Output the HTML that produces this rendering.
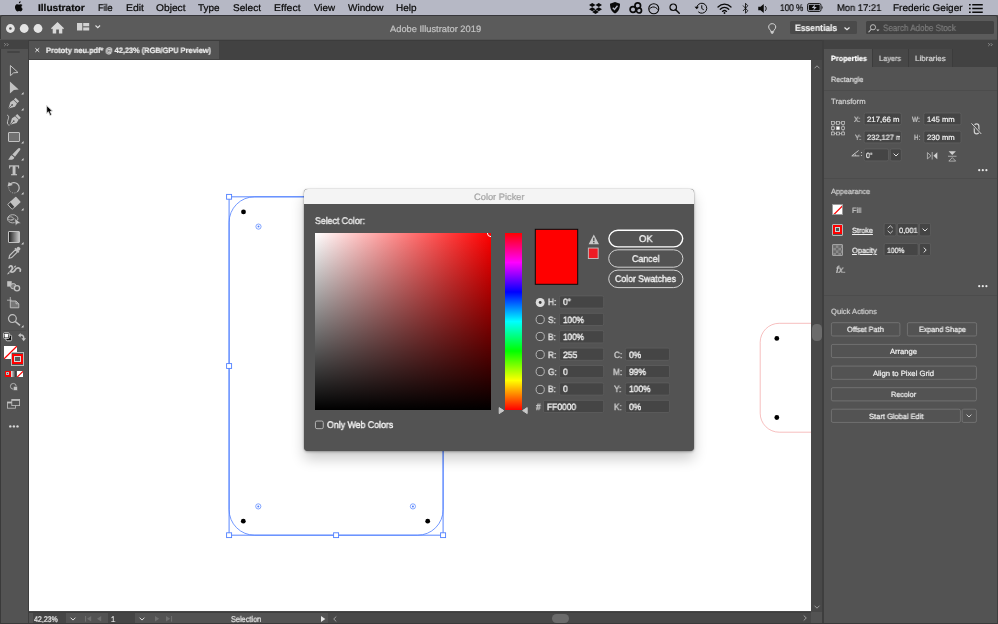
<!DOCTYPE html>
<html lang="en">
<head>
<meta charset="utf-8">
<title>Adobe Illustrator 2019 - Color Picker</title>
<style>
*{box-sizing:border-box;margin:0;padding:0}
html,body{width:998px;height:624px;overflow:hidden;background:#535353}
body{position:relative;font-family:"Liberation Sans",sans-serif;font-size:9px;color:#e6e6e6;text-rendering:geometricPrecision}
.a{position:absolute}
svg{position:absolute;overflow:visible}
.t{position:absolute;white-space:nowrap;line-height:1;-webkit-text-stroke:.22px;transform:scaleX(.88);transform-origin:0 0;will-change:transform}
.c{display:inline-block;will-change:transform;transform:scaleX(.88);transform-origin:50% 50%;white-space:nowrap}
.l{display:inline-block;will-change:transform;transform:scaleX(.88);transform-origin:0 50%;white-space:nowrap}
/* menu bar */
#menubar{left:0;top:0;width:998px;height:15.300px;background:#b6b8c5}
/* app bar */
#appbar{left:0;top:15.300px;width:998px;height:24.200px;background:#5b5b5b;border-top:1.800px solid #37373b;border-left:1px solid #3a3a3a;border-right:1px solid #3a3a3a;border-radius:2.500px 2.500px 0 0}
/* tab bar */
#tabbar{left:0;top:39.500px;width:998px;height:20.500px;background:#424242;border-top:1px solid #3c3c3c}
#doctab{left:29px;top:40.500px;width:190.200px;height:18.800px;background:#535353}
/* tool bar */
#tools{left:0;top:40px;width:29px;height:584px;background:#535353;border-right:1px solid #3e3e3e;border-left:0.800px solid #3a3a3a}
#toolshead{left:0;top:40.300px;width:28px;height:8.500px;background:#434343}
/* canvas */
#canvas{left:29px;top:60px;width:782px;height:551px;background:#fff;overflow:hidden}
#vscroll{left:811px;top:60px;width:11px;height:551px;background:#484848}
#statusbar{left:29px;top:611px;width:794px;height:13px;background:#484848}
#gap{left:822px;top:40px;width:2px;height:584px;background:#3e3e3e}
/* right panel */
#rpanel{left:824px;top:40px;width:174px;height:584px;background:#535353}
#rtabs{left:824px;top:40px;width:174px;height:27px;background:#424242}
#winb{left:0;top:623px;width:998px;height:1px;background:#3a3a3a}
#winr{left:997px;top:17px;width:1px;height:607px;background:#3f3f3f}
/* dialog */
#dlg{left:304px;top:188.500px;width:389.700px;height:262.200px;background:#535353;border-radius:4px;box-shadow:0 8px 14px rgba(0,0,0,.2),0 1px 3px rgba(0,0,0,.3),0 0 1px rgba(0,0,0,.5);overflow:hidden}
#dlgtitle{left:0;top:0;width:390px;height:15px;background:#f4f4f4}
#sq{left:315px;top:233px;width:176px;height:177px;overflow:hidden;background:linear-gradient(to bottom,rgba(0,0,0,0),#000),linear-gradient(to right,#fff,#f00)}
#hue{left:504.500px;top:233px;width:17.500px;height:177px;background:linear-gradient(to bottom,#f00 0%,#f0f 16.670%,#00f 33.330%,#0ff 50%,#0f0 66.670%,#ff0 83.330%,#f00 100%)}
</style>
</head>
<body>
<div id="menubar" class="a"></div>
<div id="appbar" class="a"></div>
<div id="tabbar" class="a"></div>
<div id="doctab" class="a"></div>
<div id="tools" class="a"></div>
<div id="toolshead" class="a"></div>
<div id="canvas" class="a"></div>
<div id="vscroll" class="a"></div>
<div id="statusbar" class="a"></div>
<div id="gap" class="a"></div>
<div id="rpanel" class="a"></div>
<div id="rtabs" class="a"></div>
<svg style="left:14.4px;top:1.4px" width="9.2" height="11" viewBox="0 0 170 205"><path fill="#0a0a0a" d="M150.4 172.2c-7.4 11-15 21.9-27.1 22.1-12 .3-15.800-7.100-29.500-7.100s-18 6.900-29.300 7.400c-11.700.4-20.600-11.800-28.100-22.700C21.100 149.700 9.400 109 25.100 81.600c7.800-13.600 21.700-22.200 36.800-22.400 11.500-.2 22.300 7.700 29.300 7.700 7 0 20.200-9.500 34-8.100 5.800.2 22 2.300 32.400 17.600-.8.500-19.400 11.300-19.200 33.800.3 26.900 23.600 35.800 23.900 35.900-.2.600-3.700 12.700-12.200 25.100zM98.800 15.800C105.200 8.300 116 2.700 124.900 2.400c1.200 10.400-3 20.800-9.200 28.300-6.200 7.500-16.300 13.300-26.300 12.500-1.300-10.200 3.700-20.800 9.400-27.400z"/></svg>
<div class="t" style="left:37.9px;top:4px;font-size:9.7px;transform:scaleX(1.044);font-weight:700;color:#0a0a0a;">Illustrator</div>
<div class="t" style="left:98.2px;top:4px;font-size:9.7px;transform:scaleX(0.928);color:#0a0a0a;">File</div>
<div class="t" style="left:125.8px;top:4px;font-size:9.7px;transform:scaleX(1.077);color:#0a0a0a;">Edit</div>
<div class="t" style="left:155.8px;top:4px;font-size:9.7px;transform:scaleX(1.056);color:#0a0a0a;">Object</div>
<div class="t" style="left:198.4px;top:4px;font-size:9.7px;transform:scaleX(1.027);color:#0a0a0a;">Type</div>
<div class="t" style="left:233.0px;top:4px;font-size:9.7px;transform:scaleX(1.039);color:#0a0a0a;">Select</div>
<div class="t" style="left:274.0px;top:4px;font-size:9.7px;transform:scaleX(1.080);color:#0a0a0a;">Effect</div>
<div class="t" style="left:313.6px;top:4px;font-size:9.7px;transform:scaleX(1.012);color:#0a0a0a;">View</div>
<div class="t" style="left:348.2px;top:4px;font-size:9.7px;transform:scaleX(1.032);color:#0a0a0a;">Window</div>
<div class="t" style="left:396.3px;top:4px;font-size:9.7px;transform:scaleX(1.028);color:#0a0a0a;">Help</div>
<div class="t" style="left:780.3px;top:4px;font-size:9.7px;transform:scaleX(0.854);color:#0a0a0a;">100 %</div>
<div class="t" style="left:837.0px;top:4px;font-size:9.7px;transform:scaleX(0.967);color:#0a0a0a;">Mon 17:21</div>
<div class="t" style="left:892.7px;top:4px;font-size:9.7px;transform:scaleX(1.034);color:#0a0a0a;">Frederic Geiger</div>
<svg style="left:589px;top:2.5px" width="13" height="11" viewBox="0 0 26 22"><g fill="#0a0a0a"><path d="M6.500 0 L13 4.100 L6.500 8.200 L0 4.100Z"/><path d="M19.500 0 L26 4.100 L19.500 8.200 L13 4.100Z"/><path d="M6.500 8.300 L13 12.400 L6.500 16.500 L0 12.400Z"/><path d="M19.500 8.300 L26 12.400 L19.500 16.500 L13 12.400Z"/><path d="M6.500 17.800 L13 13.700 L19.500 17.800 L13 21.900Z"/></g></svg>
<svg style="left:610px;top:2.3px" width="10" height="11.500" viewBox="0 0 20 23"><path fill="#0a0a0a" d="M10 0 L20 3.500 C20 12 17.500 19 10 23 C2.500 19 0 12 0 3.500Z"/><path d="M5.500 11.500 L9 15 L15 7.500" fill="none" stroke="#b6b8c5" stroke-width="2.600"/></svg>
<svg style="left:629px;top:2px" width="14" height="12" viewBox="0 0 28 24"><g fill="none" stroke="#0a0a0a" stroke-width="3.400"><circle cx="17.500" cy="7.500" r="5.600"/><circle cx="8" cy="15" r="5.800"/><circle cx="20" cy="17" r="5"/></g></svg>
<svg style="left:648.300px;top:2.500px" width="11.500" height="11.500" viewBox="0 0 23 23"><circle cx="11.500" cy="11.500" r="10" fill="none" stroke="#0a0a0a" stroke-width="2.200"/><path d="M2.500 12.500 C6 7.500 12 7 15 9 C17.500 10.500 19.500 12 21 14" fill="none" stroke="#0a0a0a" stroke-width="2"/></svg>
<svg style="left:669px;top:2.800px" width="11" height="11" viewBox="0 0 22 22"><circle cx="8.500" cy="8.500" r="6.500" fill="none" stroke="#0a0a0a" stroke-width="2.400"/><path d="M13.500 13.500 L20.500 20.500" stroke="#0a0a0a" stroke-width="2.800" stroke-linecap="round"/></svg>
<svg style="left:693.500px;top:1.800px" width="13.500" height="12.500" viewBox="0 0 27 25"><path d="M5.500 12.500 A10 10 0 1 1 8.500 19.600" fill="none" stroke="#0a0a0a" stroke-width="2"/><path d="M1 9.500 L5.600 14.500 L9.800 9.300Z" fill="#0a0a0a"/><path d="M15.500 6.500 V13 L19.500 15.500" fill="none" stroke="#0a0a0a" stroke-width="2"/></svg>
<svg style="left:717px;top:2.500px" width="15" height="11" viewBox="0 0 30 22"><g fill="none" stroke="#0a0a0a" stroke-width="2.600" stroke-linecap="round"><path d="M2 8 C9.500 0.500 20.500 0.500 28 8"/><path d="M6.500 12.500 C11.500 7.500 18.500 7.500 23.500 12.500"/><path d="M11 16.800 C13.400 14.600 16.600 14.600 19 16.800"/></g><circle cx="15" cy="20" r="1.900" fill="#0a0a0a"/></svg>
<svg style="left:741.500px;top:1.800px" width="7" height="12.500" viewBox="0 0 14 25"><path d="M2 7 L11.500 17.500 L7 22.500 V2.500 L11.500 7.500 L2 18" fill="none" stroke="#0a0a0a" stroke-width="1.700" stroke-linejoin="round"/></svg>
<svg style="left:758px;top:2.500px" width="11" height="11" viewBox="0 0 22 22"><path d="M0.500 7.500 H5 L11.500 2 V20 L5 14.500 H0.500Z" fill="#0a0a0a"/><path d="M15 7 C17 9.500 17 12.500 15 15" fill="none" stroke="#0a0a0a" stroke-width="2" stroke-linecap="round"/></svg>
<svg style="left:807px;top:3.300px" width="16.500" height="9" viewBox="0 0 33 18"><rect x="1" y="1" width="27" height="16" rx="3.500" fill="none" stroke="#0a0a0a" stroke-width="1.800"/><rect x="3.600" y="3.600" width="21.800" height="10.800" rx="1.500" fill="#0a0a0a"/><path d="M29.500 6 V12 C31.800 11.500 31.800 6.500 29.500 6Z" fill="#0a0a0a"/><path d="M16 2.500 L9.500 10 H14 L12.500 15.500 L19.500 8 H15 Z" fill="#b6b8c5"/></svg>
<svg style="left:969px;top:4px" width="14" height="9" viewBox="0 0 28 18"><g fill="#0a0a0a"><rect x="0" y="0" width="3.400" height="3"/><rect x="6.500" y="0" width="21" height="3"/><rect x="0" y="7.500" width="3.400" height="3"/><rect x="6.500" y="7.500" width="21" height="3"/><rect x="0" y="15" width="3.400" height="3"/><rect x="6.500" y="15" width="21" height="3"/></g></svg>
<svg style="left:0;top:20px" width="46" height="17" viewBox="0 0 46 17"><circle cx="10.4" cy="8.500" r="4.400" fill="#e4e4e4"/><circle cx="24.2" cy="8.500" r="4.400" fill="#e4e4e4"/><circle cx="38" cy="8.500" r="4.400" fill="#e4e4e4"/><circle cx="10.400" cy="8.500" r="1.300" fill="#555"/></svg>
<svg style="left:51px;top:22.400px" width="13" height="11.600" viewBox="0 0 13 11.600"><path fill="#d8d8d8" d="M6.500 0 L13 6.200 L12.100 7.200 L11.300 6.500 V11.500 H7.900 V7.600 H5.200 V11.500 H1.700 V6.500 L0.900 7.200 L0 6.200 Z"/></svg>
<svg style="left:76.800px;top:23.100px" width="12.200" height="7.500" viewBox="0 0 12.200 7.500"><g fill="#d2d2d2"><rect x="0" y="0" width="5.300" height="7.500"/><rect x="6.200" y="0" width="6" height="3.300"/><rect x="6.200" y="4.400" width="6" height="3.100"/></g></svg>
<svg style="left:94.600px;top:25.100px" width="5.600" height="3.400" viewBox="0 0 5.600 3.400"><path d="M0.500 0.500 L2.800 2.700 L5.100 0.500" fill="none" stroke="#e2e2e2" stroke-width="1.100"/></svg>
<div class="t" style="left:389.8px;top:25px;font-size:9.2px;transform:scaleX(1.013);color:#c2c2c2;">Adobe Illustrator 2019</div>
<svg style="left:768.300px;top:22.500px" width="8.400" height="11.500" viewBox="0 0 16.800 23"><path d="M8.400 1.300 C4 1.300 1.300 4.400 1.300 8 C1.300 10.800 3 12.300 4.300 13.800 C5 14.700 5.300 15.600 5.300 16.800 H11.500 C11.500 15.600 11.800 14.700 12.500 13.800 C13.800 12.300 15.500 10.800 15.500 8 C15.500 4.400 12.800 1.300 8.400 1.300Z" fill="none" stroke="#d6d6d6" stroke-width="2"/><rect x="5.400" y="17.800" width="6" height="2" fill="#d6d6d6"/><rect x="6.400" y="20.400" width="4" height="1.800" rx="0.800" fill="#d6d6d6"/></svg>
<div class="a" style="left:789.800px;top:21.300px;width:67px;height:13.200px;background:#4a4a4a;border-radius:1.500px"></div>
<div class="t" style="left:794.7px;top:24px;font-size:9.2px;transform:scaleX(0.929);font-weight:700;color:#ececec;">Essentials</div>
<svg style="left:844.400px;top:26.800px" width="6" height="3.500" viewBox="0 0 12 7"><path d="M1 1 L6 5.500 L11 1" fill="none" stroke="#e8e8e8" stroke-width="2.500"/></svg>
<div class="a" style="left:865.600px;top:21.300px;width:128.400px;height:13.200px;background:#424242;border-radius:1.500px"></div>
<svg style="left:868px;top:23.500px" width="12" height="9" viewBox="0 0 24 18"><circle cx="10" cy="6.500" r="5.200" fill="none" stroke="#c6c6c6" stroke-width="1.800"/><path d="M6.500 10.500 L1 16.500" stroke="#c6c6c6" stroke-width="2.200"/><path d="M16.500 11 H23 L19.750 14.500Z" fill="#c6c6c6"/></svg>
<div class="t" style="left:883.0px;top:24px;font-size:9.2px;transform:scaleX(0.873);color:#7c7c7c;">Search Adobe Stock</div>
<svg style="left:3.700px;top:42.700px" width="5.500" height="3.200" viewBox="0 0 11 6.400"><path d="M0.600 0.400 L3.400 3.200 L0.600 6 M5.600 0.400 L8.400 3.200 L5.600 6" fill="none" stroke="#b4b4b4" stroke-width="1.300"/></svg>
<div class="a" style="left:7px;top:51px;width:13px;height:2px;background:#444;border-radius:1px"></div>
<svg style="left:34.500px;top:48.200px" width="4.600" height="4.200" viewBox="0 0 9.200 8.400"><path d="M0.800 0.600 L8.400 7.800 M8.400 0.600 L0.800 7.800" stroke="#f0f0f0" stroke-width="1.900"/></svg>
<div class="t" style="left:45.7px;top:47px;font-size:7.8px;transform:scaleX(0.946);font-weight:700;color:#ededed;">Prototy neu.pdf* @ 42,23% (RGB/GPU Preview)</div>
<svg style="left:988px;top:42.700px" width="5.500" height="3.200" viewBox="0 0 11 6.400"><path d="M0.600 0.400 L3.400 3.200 L0.600 6 M5.600 0.400 L8.400 3.200 L5.600 6" fill="none" stroke="#b4b4b4" stroke-width="1.300"/></svg>
<svg style="left:9px;top:64px" width="11" height="13" viewBox="0 0 11 13"><path d="M1.400 1.500 L9 8.500 L4.700 8.800 L1.400 11.700Z" fill="none" stroke="#c2c2c2" stroke-width="1" stroke-linejoin="miter"/></svg>
<svg style="left:9px;top:81px" width="11" height="13" viewBox="0 0 11 13"><path d="M0.900 0.500 L9.700 8.600 L4.900 8.900 L0.900 12.400Z" fill="#c2c2c2"/></svg>
<svg style="left:20.7px;top:91.5px" width="2.6" height="2.4" viewBox="0 0 2.6 2.4"><path d="M2.600 0.100 V2.400 H0.200Z" fill="#d6d6d6"/></svg>
<svg style="left:0px;top:97.5px" width="28" height="13" viewBox="0 0 28 13"><g transform="translate(12.800 6.200) rotate(45) scale(0.93)"><rect x="-2.700" y="-7" width="5.400" height="2.600" fill="#c2c2c2"/><path d="M-2.700 -3.700 H2.700 L3.500 0.200 L0 6.600 L-3.500 0.200Z" fill="#c2c2c2"/><path d="M0 6.600 V1.600" stroke="#535353" stroke-width="0.800"/><circle cx="0" cy="1" r="0.950" fill="#535353"/></g></svg>
<svg style="left:20.7px;top:108px" width="2.6" height="2.4" viewBox="0 0 2.6 2.4"><path d="M2.600 0.100 V2.400 H0.200Z" fill="#d6d6d6"/></svg>
<svg style="left:0px;top:114.3px" width="28" height="13" viewBox="0 0 28 13"><g transform="translate(14.400 6.500) rotate(45) scale(0.93)"><rect x="-2.700" y="-7" width="5.400" height="2.600" fill="#c2c2c2"/><path d="M-2.700 -3.700 H2.700 L3.500 0.200 L0 6.600 L-3.500 0.200Z" fill="#c2c2c2"/><path d="M0 6.600 V1.600" stroke="#535353" stroke-width="0.800"/><circle cx="0" cy="1" r="0.950" fill="#535353"/></g><path d="M7.200 1.100 C10 2 8 5.200 7.500 7.600 C7.100 9.800 8 11.300 9.600 11.100" fill="none" stroke="#c2c2c2" stroke-width="1"/></svg>
<div class="a" style="left:8.100px;top:132px;width:12px;height:9.800px;background:#707070;border:1px solid #c2c2c2;border-radius:1px"></div>
<svg style="left:20.7px;top:141.4px" width="2.6" height="2.4" viewBox="0 0 2.6 2.4"><path d="M2.600 0.100 V2.400 H0.200Z" fill="#d6d6d6"/></svg>
<svg style="left:8.2px;top:147.5px" width="13" height="12" viewBox="0 0 13 12"><path d="M11.100 0.100 C12.200 0 12.800 1 12.100 1.900 L7 8.800 L4.300 6.600 L10.100 0.600 C10.400 0.300 10.700 0.100 11.100 0.100Z" fill="#c2c2c2"/><path d="M3.700 7.200 L6.300 9.400 C6.100 11.300 3.600 12.100 0.100 11.500 C1.900 10.500 1.800 8 3.700 7.200Z" fill="#c2c2c2"/></svg>
<svg style="left:20.7px;top:158px" width="2.6" height="2.4" viewBox="0 0 2.6 2.4"><path d="M2.600 0.100 V2.400 H0.200Z" fill="#d6d6d6"/></svg>
<div class="a" style="left:6px;top:163px;width:16px;height:16px;will-change:transform;transform:scaleX(1.06);-webkit-text-stroke:.3px;font-family:'Liberation Serif',serif;font-weight:700;font-size:14.400px;line-height:16px;text-align:center;color:#c2c2c2">T</div>
<svg style="left:20.7px;top:174.8px" width="2.6" height="2.4" viewBox="0 0 2.6 2.4"><path d="M2.600 0.100 V2.400 H0.200Z" fill="#d6d6d6"/></svg>
<svg style="left:8px;top:180.5px" width="13" height="13" viewBox="0 0 13 13"><path d="M1.74 3.82 A5.2 5.2 0 1 1 9.34 10.78" fill="none" stroke="#c2c2c2" stroke-width="1.200"/><path d="M9.34 10.78 A5.2 5.2 0 0 1 0.98 5.45" fill="none" stroke="#c2c2c2" stroke-width="0.900" stroke-dasharray="0.900 1.300"/><path d="M-0.400 5.500 L0.700 1 L4.800 4Z" fill="#c2c2c2"/></svg>
<svg style="left:20.7px;top:191.5px" width="2.6" height="2.4" viewBox="0 0 2.6 2.4"><path d="M2.600 0.100 V2.400 H0.200Z" fill="#d6d6d6"/></svg>
<svg style="left:8px;top:196.9px" width="13" height="13" viewBox="0 0 13 13"><g transform="translate(6.100 6.100) rotate(-42)"><rect x="-5.700" y="-3.300" width="4.600" height="6.600" rx="0.600" fill="#3f3f3f" stroke="#c2c2c2" stroke-width="0.900"/><rect x="-2.300" y="-3.750" width="8" height="7.500" rx="0.700" fill="#c2c2c2"/></g></svg>
<svg style="left:20.7px;top:207.7px" width="2.6" height="2.4" viewBox="0 0 2.6 2.4"><path d="M2.600 0.100 V2.400 H0.200Z" fill="#d6d6d6"/></svg>
<svg style="left:7.2px;top:213.8px" width="15" height="12" viewBox="0 0 15 12"><ellipse cx="5.700" cy="4.800" rx="5.200" ry="4.100" fill="none" stroke="#c2c2c2" stroke-width="0.900"/><ellipse cx="3.600" cy="4.400" rx="2.700" ry="1.600" fill="none" stroke="#c2c2c2" stroke-width="0.800"/><path d="M3.600 6 C5.500 6.500 7 5.500 7.600 4" fill="none" stroke="#c2c2c2" stroke-width="0.700"/><path d="M7.600 4.200 L14 9.300 L10.500 9.700 L8.500 11.800Z" fill="#c2c2c2" stroke="#535353" stroke-width="0.600"/></svg>
<div class="a" style="left:8px;top:231.300px;width:11.900px;height:11.600px;background:linear-gradient(to right,#262626,#c4c4c4);border:1px solid #c2c2c2;border-radius:1px"></div>
<svg style="left:20.7px;top:241.7px" width="2.6" height="2.4" viewBox="0 0 2.6 2.4"><path d="M2.600 0.100 V2.400 H0.200Z" fill="#d6d6d6"/></svg>
<svg style="left:7.6px;top:247px" width="13" height="12" viewBox="0 0 13 12"><g transform="translate(6.400 5.800) rotate(45)"><rect x="-1.900" y="-7.500" width="3.800" height="3.600" rx="1.500" fill="#c2c2c2"/><rect x="-2.800" y="-4.400" width="5.600" height="1.600" rx="0.400" fill="#c2c2c2"/><path d="M-1.500 -2.800 H1.500 V4.600 C1.500 6 0.700 6.500 0 7.600 C-0.700 6.500 -1.500 6 -1.500 4.600Z" fill="none" stroke="#c2c2c2" stroke-width="1.100"/></g></svg>
<svg style="left:7px;top:264.8px" width="14" height="11" viewBox="0 0 14 11"><path d="M2.200 2.400 C2.600 0.600 4.600 0.400 5.200 1.800 C6 3.600 4.600 5 3.400 6.600 C5.600 8 7.600 6.400 8.400 4.600 C9.200 2.800 11.400 2.600 12.600 3.400 C13.600 4.200 13.600 5.400 13.200 6.200" fill="none" stroke="#c2c2c2" stroke-width="1.700" stroke-linecap="round" stroke-linejoin="round"/><path d="M0.800 8.700 L8.600 1.200" stroke="#c2c2c2" stroke-width="0.700"/><path d="M0.200 9.400 L2.600 8.600 L1.200 7.200Z M9.200 0.500 L6.900 1.300 L8.300 2.700Z" fill="#c2c2c2"/></svg>
<svg style="left:7.3px;top:281.3px" width="14" height="11" viewBox="0 0 14 11"><rect x="0.200" y="0.200" width="4.500" height="5.400" fill="#c2c2c2"/><circle cx="6.300" cy="5.200" r="2.700" fill="#7a7a7a" stroke="#c2c2c2" stroke-width="1"/><circle cx="10" cy="7.300" r="2.600" fill="#535353" stroke="#c2c2c2" stroke-width="1.300"/></svg>
<svg style="left:7px;top:296.6px" width="13" height="12" viewBox="0 0 13 12"><path d="M3.300 0 V4 M0 3.200 H4.600" stroke="#c2c2c2" stroke-width="0.800" fill="none"/><path d="M3.300 4 H9 L11.800 6.800 V10.800 H3.300Z" fill="#767676" stroke="#c2c2c2" stroke-width="0.900"/><path d="M9 4 V6.800 H11.800" fill="none" stroke="#c2c2c2" stroke-width="0.800"/></svg>
<svg style="left:8px;top:314px" width="13" height="13" viewBox="0 0 13 13"><circle cx="4.400" cy="4.600" r="3.900" fill="none" stroke="#c2c2c2" stroke-width="1.200"/><path d="M7.300 7.500 L12 11.400" stroke="#c2c2c2" stroke-width="1.600"/></svg>
<svg style="left:20.9px;top:324.8px" width="2.6" height="2.4" viewBox="0 0 2.6 2.4"><path d="M2.600 0.100 V2.400 H0.200Z" fill="#d6d6d6"/></svg>
<div class="a" style="left:3px;top:329.500px;width:23px;height:1px;background:#4c4c4c"></div>
<svg style="left:3.3px;top:332.4px" width="9.5" height="9.5" viewBox="0 0 9.5 9.5"><rect x="3" y="3.200" width="5.600" height="5.600" rx="1.200" fill="#0c0c0c" stroke="#dadada" stroke-width="0.900"/><rect x="0.500" y="0.700" width="5.800" height="5.800" rx="1.200" fill="#1a1a1a" stroke="#dadada" stroke-width="0.800"/><rect x="1.600" y="1.800" width="3.600" height="3.600" rx="0.400" fill="#fff"/></svg>
<svg style="left:18px;top:333px" width="9" height="9" viewBox="0 0 9 9"><path d="M1.800 2.200 C4.800 1.600 6 3.200 5.700 6" fill="none" stroke="#c2c2c2" stroke-width="1.500"/><path d="M0 2.300 L2.700 0 V4.600Z" fill="#c2c2c2"/><path d="M3.400 5.200 H8 L5.700 8.200Z" fill="#c2c2c2"/></svg>
<div class="a" style="left:3.900px;top:345.900px;width:13.100px;height:12.900px;background:#fff;overflow:hidden"><svg style="left:0;top:0" width="13.100" height="12.900" viewBox="0 0 13.100 12.900"><path d="M0 12.900 L13.100 0" stroke="#f00" stroke-width="1.300"/></svg></div>
<div class="a" style="left:10.700px;top:352.200px;width:13.500px;height:13.400px;background:#535353;border:0.800px solid #b9b9b9"></div>
<div class="a" style="left:12.100px;top:353.600px;width:10.800px;height:10.700px;background:#f00"></div>
<div class="a" style="left:14.400px;top:355.900px;width:6.200px;height:6.100px;background:#5a5a5a;border:0.800px solid #d6d6d6"></div>
<div class="a" style="left:4.500px;top:370.600px;width:6.300px;height:6.300px;background:#f00"></div><div class="a" style="left:6.300px;top:372.400px;width:2.700px;height:2.700px;background:#535353;border:0.500px solid #bbb"></div>
<div class="a" style="left:11.100px;top:370.600px;width:4.900px;height:6.300px;background:linear-gradient(to right,#e8e8e8,#2a2a2a)"></div>
<div class="a" style="left:16.900px;top:370.600px;width:6.400px;height:6.300px;background:#fff;overflow:hidden"><svg style="left:0;top:0" width="6.400" height="6.300" viewBox="0 0 6.400 6.300"><path d="M0 6.300 L6.400 0" stroke="#f00" stroke-width="1.100"/></svg></div>
<svg style="left:10px;top:383px" width="8" height="8" viewBox="0 0 8 8"><circle cx="3.300" cy="3.300" r="2.900" fill="none" stroke="#c2c2c2" stroke-width="0.800"/><rect x="3.400" y="3.400" width="4" height="4" fill="#c2c2c2" stroke="#535353" stroke-width="0.500"/></svg>
<svg style="left:7.3px;top:399px" width="13" height="10" viewBox="0 0 13 10"><rect x="0.400" y="3" width="8" height="6.200" fill="#535353" stroke="#c2c2c2" stroke-width="0.800"/><rect x="0.400" y="3" width="8" height="1.400" fill="#c2c2c2"/><rect x="4.800" y="0.400" width="7.800" height="6.200" fill="#535353" stroke="#c2c2c2" stroke-width="0.800"/><rect x="4.800" y="0.400" width="7.800" height="1.400" fill="#c2c2c2"/></svg>
<svg style="left:9px;top:425px" width="10" height="3" viewBox="0 0 10 3"><circle cx="1.300" cy="1.400" r="1.200" fill="#d8d8d8"/><circle cx="4.900" cy="1.400" r="1.200" fill="#d8d8d8"/><circle cx="8.500" cy="1.400" r="1.200" fill="#d8d8d8"/></svg>
<svg style="left:29px;top:60px;overflow:hidden" width="782" height="551" viewBox="0 0 782 551"><rect x="200.1" y="136.8" width="214.0" height="338.4" rx="25.5" ry="25.5" fill="none" stroke="#4f7fff" stroke-width="0.800"/><rect x="200.1" y="136.8" width="214.0" height="338.4" fill="none" stroke="#4f7fff" stroke-width="1.100" opacity="0.850"/><rect x="197.6" y="134.4" width="5" height="4.800" fill="#fff" stroke="#4f7fff" stroke-width="0.900"/><rect x="197.6" y="303.6" width="5" height="4.800" fill="#fff" stroke="#4f7fff" stroke-width="0.900"/><rect x="197.6" y="472.8" width="5" height="4.800" fill="#fff" stroke="#4f7fff" stroke-width="0.900"/><rect x="304.6" y="472.8" width="5" height="4.800" fill="#fff" stroke="#4f7fff" stroke-width="0.900"/><rect x="411.6" y="472.8" width="5" height="4.800" fill="#fff" stroke="#4f7fff" stroke-width="0.900"/><rect x="411.6" y="303.6" width="5" height="4.800" fill="#fff" stroke="#4f7fff" stroke-width="0.900"/><rect x="411.6" y="134.4" width="5" height="4.800" fill="#fff" stroke="#4f7fff" stroke-width="0.900"/><rect x="304.6" y="134.4" width="5" height="4.800" fill="#fff" stroke="#4f7fff" stroke-width="0.900"/><circle cx="229.5" cy="166.6" r="2.600" fill="#fff" stroke="#4f7fff" stroke-width="0.700"/><circle cx="229.5" cy="166.6" r="1" fill="#4f7fff"/><circle cx="229.3" cy="446.4" r="2.600" fill="#fff" stroke="#4f7fff" stroke-width="0.700"/><circle cx="229.3" cy="446.4" r="1" fill="#4f7fff"/><circle cx="383.9" cy="446.4" r="2.600" fill="#fff" stroke="#4f7fff" stroke-width="0.700"/><circle cx="383.9" cy="446.4" r="1" fill="#4f7fff"/><circle cx="383.9" cy="166.6" r="2.600" fill="#fff" stroke="#4f7fff" stroke-width="0.700"/><circle cx="383.9" cy="166.6" r="1" fill="#4f7fff"/><circle cx="214.5" cy="151.9" r="2.400" fill="#000"/><circle cx="214.3" cy="461.2" r="2.400" fill="#000"/><circle cx="398.7" cy="461.2" r="2.400" fill="#000"/><circle cx="398.7" cy="151.9" r="2.400" fill="#000"/><rect x="731.2" y="263.3" width="120" height="108.9" rx="19" ry="19" fill="none" stroke="#f29c9c" stroke-width="0.650"/><circle cx="747.8" cy="278.4" r="2.400" fill="#000"/><circle cx="747.8" cy="357.5" r="2.400" fill="#000"/><g transform="translate(17.7 45.6)"><path d="M0 0 L0 7.800 L1.800 6.200 L3.300 9.900 L4.900 9.200 L3.400 5.700 L5.700 5.500 Z" fill="#000" stroke="#fff" stroke-width="0.700" stroke-linejoin="round" style="filter:drop-shadow(0 0.500px 0.700px rgba(0,0,0,.3))"/></g></svg>
<svg style="left:813.700px;top:64.600px" width="6" height="4" viewBox="0 0 6 4"><path d="M0.500 3.300 L3 0.800 L5.500 3.300" fill="none" stroke="#a8a8a8" stroke-width="0.900"/></svg>
<svg style="left:813.700px;top:604.500px" width="6" height="4" viewBox="0 0 6 4"><path d="M0.500 0.700 L3 3.200 L5.500 0.700" fill="none" stroke="#a8a8a8" stroke-width="0.900"/></svg>
<div class="a" style="left:812px;top:324px;width:9.700px;height:17.300px;border-radius:4.500px;background:#6b6b6b"></div>
<div class="a" style="left:29px;top:611.500px;width:794px;height:1.200px;background:#3f3f3f"></div>
<div class="a" style="left:29px;top:612.700px;width:299px;height:11.300px;background:#535353"></div>
<div class="a" style="left:32.500px;top:612.700px;width:33.300px;height:11.300px;background:#454545"></div>
<div class="a" style="left:108.200px;top:612.700px;width:27.100px;height:11.300px;background:#454545"></div>
<div class="t" style="left:34.3px;top:616px;font-size:8.2px;transform:scaleX(0.852);color:#ededed;">42,23%</div>
<div class="t" style="left:110.5px;top:616px;font-size:8.2px;transform:scaleX(0.900);color:#ededed;">1</div>
<svg style="left:69.500px;top:616.800px" width="6" height="4" viewBox="0 0 6 4"><path d="M0.600 0.700 L3 3.100 L5.400 0.700" fill="none" stroke="#e0e0e0" stroke-width="1"/></svg>
<svg style="left:139.200px;top:616.800px" width="6" height="4" viewBox="0 0 6 4"><path d="M0.600 0.700 L3 3.100 L5.400 0.700" fill="none" stroke="#e0e0e0" stroke-width="1"/></svg>
<svg style="left:84.800px;top:615.800px" width="7" height="6" viewBox="0 0 7 6"><rect x="0" y="0" width="1.100" height="5.600" fill="#6f6f6f"/><path d="M6.200 0 V5.600 L2 2.800Z" fill="#6f6f6f"/></svg>
<svg style="left:97.400px;top:615.800px" width="5" height="6" viewBox="0 0 5 6"><path d="M4.200 0 V5.600 L0 2.800Z" fill="#6f6f6f"/></svg>
<svg style="left:155px;top:615.800px" width="5" height="6" viewBox="0 0 5 6"><path d="M0 0 V5.600 L4.200 2.800Z" fill="#6f6f6f"/></svg>
<svg style="left:165.500px;top:615.800px" width="7" height="6" viewBox="0 0 7 6"><path d="M0 0 V5.600 L4.200 2.800Z" fill="#6f6f6f"/><rect x="5" y="0" width="1.100" height="5.600" fill="#6f6f6f"/></svg>
<div class="t" style="left:231.3px;top:615px;font-size:8.4px;transform:scaleX(0.877);color:#e4e4e4;">Selection</div>
<svg style="left:320.600px;top:615.600px" width="5" height="6" viewBox="0 0 5 6"><path d="M0 0 V6 L4.300 3Z" fill="#e6e6e6"/></svg>
<svg style="left:332.800px;top:615.500px" width="4" height="6" viewBox="0 0 4 6"><path d="M3.300 0.500 L0.700 3 L3.300 5.500" fill="none" stroke="#a8a8a8" stroke-width="0.900"/></svg>
<svg style="left:802.800px;top:614.900px" width="4" height="6" viewBox="0 0 4 6"><path d="M0.700 0.500 L3.300 3 L0.700 5.500" fill="none" stroke="#a8a8a8" stroke-width="0.900"/></svg>
<div class="a" style="left:552px;top:613.500px;width:17.300px;height:9px;border-radius:4.500px;background:#6b6b6b"></div>
<div class="a" style="left:811px;top:611.500px;width:11px;height:12.500px;background:#535353"></div>
<div class="a" style="left:824px;top:48.600px;width:174px;height:18.200px;background:#424242"></div>
<div class="a" style="left:872.300px;top:48.600px;width:79.700px;height:18.200px;background:#474747"></div>
<div class="a" style="left:824px;top:48.600px;width:48.300px;height:18.400px;background:#535353"></div>
<div class="a" style="left:872.300px;top:48.600px;width:0.800px;height:18.200px;background:#3c3c3c"></div>
<div class="a" style="left:908.300px;top:48.600px;width:0.800px;height:18.200px;background:#3c3c3c"></div>
<div class="a" style="left:951.800px;top:48.600px;width:0.800px;height:18.200px;background:#3c3c3c"></div>
<div class="t" style="left:830.7px;top:55px;font-size:7.6px;transform:scaleX(0.958);font-weight:700;color:#ffffff;">Properties</div>
<div class="t" style="left:878.8px;top:55px;font-size:7.6px;transform:scaleX(0.965);color:#d4d4d4;">Layers</div>
<div class="t" style="left:915.0px;top:55px;font-size:7.6px;transform:scaleX(1.057);color:#d4d4d4;">Libraries</div>
<div class="t" style="left:831.0px;top:76px;font-size:7.6px;transform:scaleX(0.944);color:#dddddd;">Rectangle</div>
<div class="a" style="left:824px;top:89.800px;width:174px;height:0.900px;background:#4c4c4c"></div>
<div class="t" style="left:831.2px;top:98px;font-size:7.6px;transform:scaleX(1.005);color:#cfcfcf;">Transform</div>
<svg style="left:831px;top:121px" width="14" height="14.5" viewBox="0 0 14 14.5"><rect x="0.5" y="0.5" width="2.800" height="2.800" fill="none" stroke="#d0d0d0" stroke-width="0.700"/><rect x="0.5" y="5.8" width="2.800" height="2.800" fill="none" stroke="#d0d0d0" stroke-width="0.700"/><rect x="0.5" y="11.1" width="2.800" height="2.800" fill="none" stroke="#d0d0d0" stroke-width="0.700"/><rect x="5.6" y="0.5" width="2.800" height="2.800" fill="none" stroke="#d0d0d0" stroke-width="0.700"/><rect x="5.6" y="5.8" width="2.800" height="2.800" fill="#fff" stroke="#d0d0d0" stroke-width="0.700"/><rect x="5.6" y="11.1" width="2.800" height="2.800" fill="none" stroke="#d0d0d0" stroke-width="0.700"/><rect x="10.7" y="0.5" width="2.800" height="2.800" fill="none" stroke="#d0d0d0" stroke-width="0.700"/><rect x="10.7" y="5.8" width="2.800" height="2.800" fill="none" stroke="#d0d0d0" stroke-width="0.700"/><rect x="10.7" y="11.1" width="2.800" height="2.800" fill="none" stroke="#d0d0d0" stroke-width="0.700"/><path d="M3.300 1.900 H5.600 M8.400 1.900 H10.700 M3.300 12.500 H5.600 M8.400 12.500 H10.700 M1.900 3.300 V5.800 M1.900 8.600 V11.100 M12.100 3.300 V5.800 M12.100 8.600 V11.100" stroke="#d0d0d0" stroke-width="0.600" fill="none"/></svg>
<div class="t" style="left:854.4px;top:116px;font-size:7.6px;transform:scaleX(0.877);color:#cfcfcf;">X:</div>
<svg style="left:862px;top:111px" width="42" height="16"><rect x="2.10" y="2.00" width="37.20" height="11.80" rx="1.5" fill="#454545" stroke="#616161" stroke-width="0.8"/></svg>
<div class="t" style="left:866.9px;top:116px;font-size:7.6px;transform:scaleX(1.026);color:#f0f0f0;">217,66 m</div>
<div class="t" style="left:854.8px;top:134px;font-size:7.6px;transform:scaleX(0.887);color:#cfcfcf;">Y:</div>
<svg style="left:862px;top:129px" width="42" height="16"><rect x="2.10" y="2.10" width="37.20" height="11.80" rx="1.5" fill="#454545" stroke="#616161" stroke-width="0.8"/></svg>
<div class="a" style="left:864.500px;top:131px;width:35.300px;height:12px;overflow:hidden"><div class="t" style="left:2.4px;top:3px;font-size:7.6px;transform:scaleX(0.980);color:#f0f0f0;">232,127 mm</div></div>
<div class="t" style="left:912.4px;top:116px;font-size:7.6px;transform:scaleX(0.853);color:#cfcfcf;">W:</div>
<svg style="left:922px;top:111px" width="42" height="16"><rect x="1.80" y="2.00" width="37.20" height="11.80" rx="1.5" fill="#454545" stroke="#616161" stroke-width="0.8"/></svg>
<div class="t" style="left:927.0px;top:116px;font-size:7.6px;transform:scaleX(1.009);color:#f0f0f0;">145 mm</div>
<div class="t" style="left:914.0px;top:134px;font-size:7.6px;transform:scaleX(0.816);color:#cfcfcf;">H:</div>
<svg style="left:922px;top:129px" width="42" height="16"><rect x="1.80" y="2.10" width="37.20" height="11.80" rx="1.5" fill="#454545" stroke="#616161" stroke-width="0.8"/></svg>
<div class="t" style="left:927.0px;top:134px;font-size:7.6px;transform:scaleX(1.009);color:#f0f0f0;">230 mm</div>
<svg style="left:970.7px;top:122.6px" width="11" height="12" viewBox="0 0 11 12"><rect x="3.300" y="0.900" width="4.600" height="10" rx="2.300" fill="none" stroke="#d2d2d2" stroke-width="1.200"/><path d="M0.500 0.400 L10.300 11" stroke="#535353" stroke-width="2.400"/><path d="M0.500 0.400 L10.300 11" stroke="#d2d2d2" stroke-width="1"/></svg>
<svg style="left:850.5px;top:150px" width="12" height="7" viewBox="0 0 12 7"><path d="M7.600 0.500 L0.800 5.900 H8.400" fill="none" stroke="#d0d0d0" stroke-width="0.900"/><path d="M4.700 5.900 A3.600 3.600 0 0 0 3.600 3.600" fill="none" stroke="#d0d0d0" stroke-width="0.700"/><circle cx="10.500" cy="2.600" r="0.600" fill="#d0d0d0"/><circle cx="10.500" cy="5.500" r="0.600" fill="#d0d0d0"/></svg>
<svg style="left:862px;top:147px" width="29" height="16"><rect x="2.10" y="1.90" width="24.40" height="12.00" rx="1.5" fill="#454545" stroke="#616161" stroke-width="0.8"/></svg>
<div class="t" style="left:865.8px;top:152px;font-size:7.6px;transform:scaleX(0.900);color:#f0f0f0;">0°</div>
<svg style="left:888px;top:147px" width="15" height="16"><rect x="2.30" y="1.90" width="11.00" height="12.00" rx="1.5" fill="#454545" stroke="#616161" stroke-width="0.8"/></svg>
<svg style="left:892.8px;top:153.2px" width="6" height="4" viewBox="0 0 6 4"><path d="M0.600 0.600 L3 3 L5.400 0.600" fill="none" stroke="#e4e4e4" stroke-width="1"/></svg>
<svg style="left:927px;top:152.3px" width="11" height="7.5" viewBox="0 0 11 7.5"><path d="M0.400 0.600 V6.900 L4 3.750Z" fill="none" stroke="#d0d0d0" stroke-width="0.700"/><path d="M10.300 0.300 V7.200 L6.400 3.750Z" fill="#d0d0d0"/><path d="M5.200 0 V7.500" stroke="#d0d0d0" stroke-width="0.700"/></svg>
<svg style="left:948px;top:150.5px" width="8.5" height="10.5" viewBox="0 0 8.5 10.5"><path d="M0.600 0.300 H7.900 L4.250 4Z" fill="#d0d0d0"/><path d="M0.800 10.100 H7.700 L4.250 6.600Z" fill="none" stroke="#d0d0d0" stroke-width="0.700"/><path d="M0 5.250 H8.500" stroke="#d0d0d0" stroke-width="0.700"/></svg>
<svg style="left:978.2px;top:168.8px" width="10" height="2.4" viewBox="0 0 10 2.4"><circle cx="1.200" cy="1.200" r="1.100" fill="#e8e8e8"/><circle cx="4.800" cy="1.200" r="1.100" fill="#e8e8e8"/><circle cx="8.400" cy="1.200" r="1.100" fill="#e8e8e8"/></svg>
<div class="a" style="left:824px;top:178.300px;width:174px;height:0.900px;background:#4c4c4c"></div>
<div class="t" style="left:831.2px;top:188px;font-size:7.6px;transform:scaleX(0.954);color:#cfcfcf;">Appearance</div>
<div class="a" style="left:831.600px;top:203.900px;width:11.600px;height:11.600px;background:#fff;border:0.600px solid #9a9a9a;overflow:hidden"><svg style="left:0;top:0" width="10.400" height="10.400" viewBox="0 0 10.400 10.400"><path d="M-0.300 10.700 L10.700 -0.300" stroke="#f00" stroke-width="1.200"/></svg></div>
<div class="t" style="left:852.1px;top:207px;font-size:7.6px;transform:scaleX(0.958);color:#c4c4c4;">Fill</div>
<div class="a" style="left:831.600px;top:223.900px;width:11.600px;height:11.700px;background:#535353;border:0.700px solid #b5b5b5;border-radius:1px"></div>
<div class="a" style="left:832.900px;top:225.200px;width:9px;height:9.100px;background:#f00"></div>
<div class="a" style="left:835px;top:227.300px;width:4.800px;height:4.900px;background:#535353;border:0.700px solid #d0d0d0"></div>
<div class="t" style="left:852.1px;top:227px;font-size:7.6px;transform:scaleX(0.952);color:#f0f0f0;text-decoration:underline;text-underline-offset:1px">Stroke</div>
<svg style="left:882px;top:222px" width="16" height="17"><rect x="2.10" y="1.40" width="12.00" height="12.50" rx="1.5" fill="#454545" stroke="#616161" stroke-width="0.8"/></svg>
<svg style="left:887px;top:225.3px" width="6.5" height="9" viewBox="0 0 6.5 9"><path d="M0.700 3.200 L3.250 0.700 L5.800 3.200 M0.700 5.800 L3.250 8.300 L5.800 5.800" fill="none" stroke="#d8d8d8" stroke-width="0.900"/></svg>
<svg style="left:895px;top:222px" width="25" height="17"><rect x="2.30" y="1.40" width="20.90" height="12.50" rx="1.5" fill="#454545" stroke="#616161" stroke-width="0.8"/></svg>
<div class="a" style="left:898px;top:224px;width:19.800px;height:11px;overflow:hidden"><div class="t" style="left:1.0px;top:3px;font-size:7.6px;transform:scaleX(0.980);color:#f0f0f0;">0,001 mm</div></div>
<svg style="left:918px;top:222px" width="16" height="17"><rect x="1.40" y="1.40" width="11.20" height="12.50" rx="1.5" fill="#454545" stroke="#616161" stroke-width="0.8"/></svg>
<svg style="left:922px;top:228px" width="6" height="4" viewBox="0 0 6 4"><path d="M0.600 0.600 L3 3 L5.400 0.600" fill="none" stroke="#e4e4e4" stroke-width="1"/></svg>
<div class="a" style="left:831.600px;top:244px;width:11.600px;height:11.600px;border:0.700px solid #a2a2a2;border-radius:1px;background:#777;background-image:conic-gradient(#8a8a8a 25%,#6a6a6a 0 50%,#8a8a8a 0 75%,#6a6a6a 0);background-size:5.100px 5.100px;background-position:0.300px 0.300px"></div>
<div class="t" style="left:852.1px;top:247px;font-size:7.6px;transform:scaleX(0.966);color:#f0f0f0;text-decoration:underline;text-underline-offset:1px">Opacity</div>
<svg style="left:882px;top:242px" width="38" height="17"><rect x="2.10" y="1.50" width="34.10" height="12.20" rx="1.5" fill="#454545" stroke="#616161" stroke-width="0.8"/></svg>
<div class="t" style="left:886.9px;top:247px;font-size:7.6px;transform:scaleX(0.890);color:#f0f0f0;">100%</div>
<svg style="left:918px;top:242px" width="16" height="17"><rect x="1.40" y="1.50" width="11.20" height="12.20" rx="1.5" fill="#454545" stroke="#616161" stroke-width="0.8"/></svg>
<svg style="left:923.3px;top:246.6px" width="4" height="6" viewBox="0 0 4 6"><path d="M0.700 0.600 L3.200 3 L0.700 5.400" fill="none" stroke="#e4e4e4" stroke-width="1"/></svg>
<div class="t" style="left:835.7px;top:266px;font-size:10px;transform:scaleX(0.928);color:#d0d0d0;font-style:italic">fx.</div>
<svg style="left:978.2px;top:285.40000000000003px" width="10" height="2.4" viewBox="0 0 10 2.4"><circle cx="1.200" cy="1.200" r="1.100" fill="#e8e8e8"/><circle cx="4.800" cy="1.200" r="1.100" fill="#e8e8e8"/><circle cx="8.400" cy="1.200" r="1.100" fill="#e8e8e8"/></svg>
<div class="a" style="left:824px;top:295.200px;width:174px;height:0.900px;background:#4c4c4c"></div>
<div class="t" style="left:831.2px;top:308px;font-size:7.6px;transform:scaleX(0.995);color:#cfcfcf;">Quick Actions</div>
<svg style="left:830px;top:321px" width="73" height="18"><rect x="1.40" y="1.70" width="68.50" height="13.30" rx="1.5" fill="none" stroke="#787878" stroke-width="0.8"/></svg><div class="t" style="left:847.2px;top:326px;font-size:7.6px;transform:scaleX(0.974);color:#f0f0f0;">Offset Path</div>
<svg style="left:906px;top:321px" width="74" height="18"><rect x="1.40" y="1.70" width="69.20" height="13.30" rx="1.5" fill="none" stroke="#787878" stroke-width="0.8"/></svg><div class="t" style="left:918.5px;top:326px;font-size:7.6px;transform:scaleX(0.943);color:#f0f0f0;">Expand Shape</div>
<svg style="left:830px;top:343px" width="149" height="18"><rect x="1.40" y="1.40" width="145.00" height="13.20" rx="1.5" fill="none" stroke="#787878" stroke-width="0.8"/></svg><div class="t" style="left:890.4px;top:348px;font-size:7.6px;transform:scaleX(0.999);color:#f0f0f0;">Arrange</div>
<svg style="left:830px;top:364px" width="149" height="18"><rect x="1.40" y="2.10" width="145.00" height="13.20" rx="1.5" fill="none" stroke="#787878" stroke-width="0.8"/></svg><div class="t" style="left:873.4px;top:370px;font-size:7.6px;transform:scaleX(1.010);color:#f0f0f0;">Align to Pixel Grid</div>
<svg style="left:830px;top:386px" width="149" height="18"><rect x="1.40" y="1.70" width="145.00" height="13.20" rx="1.5" fill="none" stroke="#787878" stroke-width="0.8"/></svg><div class="t" style="left:891.4px;top:391px;font-size:7.6px;transform:scaleX(0.955);color:#f0f0f0;">Recolor</div>
<svg style="left:830px;top:407px" width="133" height="18"><rect x="1.40" y="2.20" width="129.00" height="13.20" rx="1.5" fill="none" stroke="#787878" stroke-width="0.8"/></svg><div class="t" style="left:868.6px;top:413px;font-size:7.6px;transform:scaleX(0.985);color:#f0f0f0;">Start Global Edit</div>
<svg style="left:960px;top:407px" width="19" height="18"><rect x="2.20" y="2.20" width="14.20" height="13.20" rx="1.5" fill="none" stroke="#787878" stroke-width="0.8"/></svg>
<svg style="left:966.3px;top:414px" width="6" height="4" viewBox="0 0 6 4"><path d="M0.600 0.600 L3 3 L5.400 0.600" fill="none" stroke="#d8d8d8" stroke-width="0.900"/></svg>
<div id="dlg" class="a"><div id="dlgtitle" class="a"></div></div>
<div class="t" style="left:473.6px;top:193px;font-size:9.3px;transform:scaleX(0.997);color:#a3a3a3;">Color Picker</div>
<div class="t" style="left:314.7px;top:217px;font-size:9.6px;transform:scaleX(0.912);color:#ececec;-webkit-text-stroke:.36px;">Select Color:</div>
<div id="sq" class="a"><svg style="left:168px;top:-8px" width="16" height="16" viewBox="0 0 16 16"><circle cx="8" cy="8" r="3.600" fill="none" stroke="#fff" stroke-width="1"/></svg></div>
<div id="hue" class="a"></div>
<svg style="left:498px;top:405.5px" width="32" height="10" viewBox="0 0 32 10"><path d="M1.200 1.600 L5.800 4.600 L1.200 7.600 Z" fill="#c9c9c9" stroke="#c9c9c9" stroke-width="1" stroke-linejoin="round"/><path d="M29.200 1.600 L24.600 4.600 L29.200 7.600 Z" fill="#c9c9c9" stroke="#c9c9c9" stroke-width="1" stroke-linejoin="round"/></svg>
<svg style="left:533px;top:227px" width="47" height="60"><rect x="2.30" y="2.30" width="42.40" height="55.00" rx="0" fill="#ff0000" stroke="#0a0a0a" stroke-width="1"/></svg>
<svg style="left:587.5px;top:233.5px" width="12" height="11" viewBox="0 0 12 11"><path d="M5.800 0.500 L11 10.300 L0.600 10.300 Z" fill="#c8c8c8"/><rect x="5.100" y="3.700" width="1.400" height="3.500" fill="#535353"/><rect x="5.100" y="8" width="1.400" height="1.300" fill="#535353"/></svg>
<svg style="left:586px;top:246px" width="14" height="15"><rect x="2.35" y="2.05" width="9.80" height="10.50" rx="0" fill="#ed1c24" stroke="#c4c4c4" stroke-width="0.9"/></svg>
<svg style="left:607px;top:228px" width="79" height="22"><rect x="1.90" y="2.20" width="73.80" height="16.70" rx="9.049999999999997" fill="none" stroke="#ffffff" stroke-width="1.4"/></svg><div class="t" style="left:639.0px;top:235px;font-size:9.6px;transform:scaleX(0.973);color:#f2f2f2;-webkit-text-stroke:.36px;">OK</div>
<svg style="left:607px;top:248px" width="79" height="22"><rect x="1.70" y="1.80" width="74.20" height="17.40" rx="9.199999999999989" fill="none" stroke="#d2d2d2" stroke-width="1.0"/></svg><div class="t" style="left:632.0px;top:255px;font-size:9.6px;transform:scaleX(0.920);color:#f2f2f2;-webkit-text-stroke:.36px;">Cancel</div>
<svg style="left:607px;top:268px" width="79" height="22"><rect x="1.70" y="2.10" width="74.20" height="17.50" rx="9.25" fill="none" stroke="#d2d2d2" stroke-width="1.0"/></svg><div class="t" style="left:615.3px;top:275px;font-size:9.6px;transform:scaleX(0.907);color:#f2f2f2;-webkit-text-stroke:.36px;">Color Swatches</div>
<svg style="left:535px;top:296.5px" width="11" height="11" viewBox="0 0 11 11"><circle cx="5.200" cy="5.500" r="4.500" fill="#dcdcdc"/><circle cx="5.200" cy="5.500" r="1.400" fill="#3c3c3c"/></svg>
<div class="t" style="left:547.6px;top:298px;font-size:9.2px;transform:scaleX(0.900);color:#e4e4e4;-webkit-text-stroke:.36px;">H:</div>
<svg style="left:558px;top:294px" width="49" height="17"><rect x="1.40" y="1.90" width="44.30" height="12.20" rx="1.5" fill="#454545" stroke="#5e5e5e" stroke-width="0.8"/></svg>
<div class="t" style="left:562.6px;top:298px;font-size:9.2px;transform:scaleX(0.920);color:#f2f2f2;-webkit-text-stroke:.36px;">0°</div>
<svg style="left:535px;top:313.9px" width="11" height="11" viewBox="0 0 11 11"><circle cx="5.200" cy="5.500" r="4.100" fill="#4c4c4c" stroke="#c2c2c2" stroke-width="0.900"/></svg>
<div class="t" style="left:547.6px;top:316px;font-size:9.2px;transform:scaleX(0.900);color:#e4e4e4;-webkit-text-stroke:.36px;">S:</div>
<svg style="left:558px;top:311px" width="49" height="17"><rect x="1.40" y="2.30" width="44.30" height="12.20" rx="1.5" fill="#454545" stroke="#5e5e5e" stroke-width="0.8"/></svg>
<div class="t" style="left:562.6px;top:316px;font-size:9.2px;transform:scaleX(0.893);color:#f2f2f2;-webkit-text-stroke:.36px;">100%</div>
<svg style="left:535px;top:331.3px" width="11" height="11" viewBox="0 0 11 11"><circle cx="5.200" cy="5.500" r="4.100" fill="#4c4c4c" stroke="#c2c2c2" stroke-width="0.900"/></svg>
<div class="t" style="left:547.6px;top:333px;font-size:9.2px;transform:scaleX(0.900);color:#e4e4e4;-webkit-text-stroke:.36px;">B:</div>
<svg style="left:558px;top:329px" width="49" height="17"><rect x="1.40" y="1.70" width="44.30" height="12.20" rx="1.5" fill="#454545" stroke="#5e5e5e" stroke-width="0.8"/></svg>
<div class="t" style="left:562.6px;top:333px;font-size:9.2px;transform:scaleX(0.893);color:#f2f2f2;-webkit-text-stroke:.36px;">100%</div>
<svg style="left:535px;top:348.7px" width="11" height="11" viewBox="0 0 11 11"><circle cx="5.200" cy="5.500" r="4.100" fill="#4c4c4c" stroke="#c2c2c2" stroke-width="0.900"/></svg>
<div class="t" style="left:547.6px;top:351px;font-size:9.2px;transform:scaleX(0.900);color:#e4e4e4;-webkit-text-stroke:.36px;">R:</div>
<svg style="left:558px;top:346px" width="49" height="17"><rect x="1.40" y="2.10" width="44.30" height="12.20" rx="1.5" fill="#454545" stroke="#5e5e5e" stroke-width="0.8"/></svg>
<div class="t" style="left:562.6px;top:351px;font-size:9.2px;transform:scaleX(0.938);color:#f2f2f2;-webkit-text-stroke:.36px;">255</div>
<svg style="left:535px;top:366.1px" width="11" height="11" viewBox="0 0 11 11"><circle cx="5.200" cy="5.500" r="4.100" fill="#4c4c4c" stroke="#c2c2c2" stroke-width="0.900"/></svg>
<div class="t" style="left:547.6px;top:368px;font-size:9.2px;transform:scaleX(0.900);color:#e4e4e4;-webkit-text-stroke:.36px;">G:</div>
<svg style="left:558px;top:364px" width="49" height="17"><rect x="1.40" y="1.50" width="44.30" height="12.20" rx="1.5" fill="#454545" stroke="#5e5e5e" stroke-width="0.8"/></svg>
<div class="t" style="left:562.6px;top:368px;font-size:9.2px;transform:scaleX(0.920);color:#f2f2f2;-webkit-text-stroke:.36px;">0</div>
<svg style="left:535px;top:383.5px" width="11" height="11" viewBox="0 0 11 11"><circle cx="5.200" cy="5.500" r="4.100" fill="#4c4c4c" stroke="#c2c2c2" stroke-width="0.900"/></svg>
<div class="t" style="left:547.6px;top:385px;font-size:9.2px;transform:scaleX(0.900);color:#e4e4e4;-webkit-text-stroke:.36px;">B:</div>
<svg style="left:558px;top:381px" width="49" height="17"><rect x="1.40" y="1.90" width="44.30" height="12.20" rx="1.5" fill="#454545" stroke="#5e5e5e" stroke-width="0.8"/></svg>
<div class="t" style="left:562.6px;top:385px;font-size:9.2px;transform:scaleX(0.920);color:#f2f2f2;-webkit-text-stroke:.36px;">0</div>
<div class="t" style="left:613.8px;top:351px;font-size:9.2px;transform:scaleX(0.900);color:#cccccc;-webkit-text-stroke:.36px;">C:</div>
<svg style="left:623px;top:346px" width="49" height="17"><rect x="2.30" y="2.10" width="44.30" height="12.20" rx="1.5" fill="#454545" stroke="#5e5e5e" stroke-width="0.8"/></svg>
<div class="t" style="left:628.5px;top:351px;font-size:9.2px;transform:scaleX(0.920);color:#f2f2f2;-webkit-text-stroke:.36px;">0%</div>
<div class="t" style="left:612.5px;top:368px;font-size:9.2px;transform:scaleX(0.900);color:#cccccc;-webkit-text-stroke:.36px;">M:</div>
<svg style="left:623px;top:364px" width="49" height="17"><rect x="2.30" y="1.50" width="44.30" height="12.20" rx="1.5" fill="#454545" stroke="#5e5e5e" stroke-width="0.8"/></svg>
<div class="t" style="left:628.5px;top:368px;font-size:9.2px;transform:scaleX(0.920);color:#f2f2f2;-webkit-text-stroke:.36px;">99%</div>
<div class="t" style="left:613.8px;top:385px;font-size:9.2px;transform:scaleX(0.900);color:#cccccc;-webkit-text-stroke:.36px;">Y:</div>
<svg style="left:623px;top:381px" width="49" height="17"><rect x="2.30" y="1.90" width="44.30" height="12.20" rx="1.5" fill="#454545" stroke="#5e5e5e" stroke-width="0.8"/></svg>
<div class="t" style="left:628.5px;top:385px;font-size:9.2px;transform:scaleX(0.920);color:#f2f2f2;-webkit-text-stroke:.36px;">100%</div>
<div class="t" style="left:613.8px;top:403px;font-size:9.2px;transform:scaleX(0.900);color:#cccccc;-webkit-text-stroke:.36px;">K:</div>
<svg style="left:623px;top:398px" width="49" height="17"><rect x="2.30" y="2.30" width="44.30" height="12.20" rx="1.5" fill="#454545" stroke="#5e5e5e" stroke-width="0.8"/></svg>
<div class="t" style="left:628.5px;top:403px;font-size:9.2px;transform:scaleX(0.920);color:#f2f2f2;-webkit-text-stroke:.36px;">0%</div>
<div class="t" style="left:536.3px;top:403px;font-size:9.2px;transform:scaleX(0.900);color:#cccccc;-webkit-text-stroke:.36px;">#</div>
<svg style="left:542px;top:398px" width="65" height="17"><rect x="1.40" y="2.30" width="60.30" height="12.20" rx="1.5" fill="#454545" stroke="#5e5e5e" stroke-width="0.8"/></svg>
<div class="t" style="left:546.8px;top:403px;font-size:9.2px;transform:scaleX(0.920);color:#f2f2f2;-webkit-text-stroke:.36px;">FF0000</div>
<svg style="left:314px;top:419px" width="12" height="12"><rect x="1.45" y="2.05" width="7.80" height="7.60" rx="1.5" fill="#4c4c4c" stroke="#bdbdbd" stroke-width="0.9"/></svg>
<div class="t" style="left:327.0px;top:421px;font-size:9.6px;transform:scaleX(0.916);color:#f6f6f6;-webkit-text-stroke:.36px;">Only Web Colors</div>
<div id="winb" class="a"></div>
<div id="winr" class="a"></div>
</body>
</html>
